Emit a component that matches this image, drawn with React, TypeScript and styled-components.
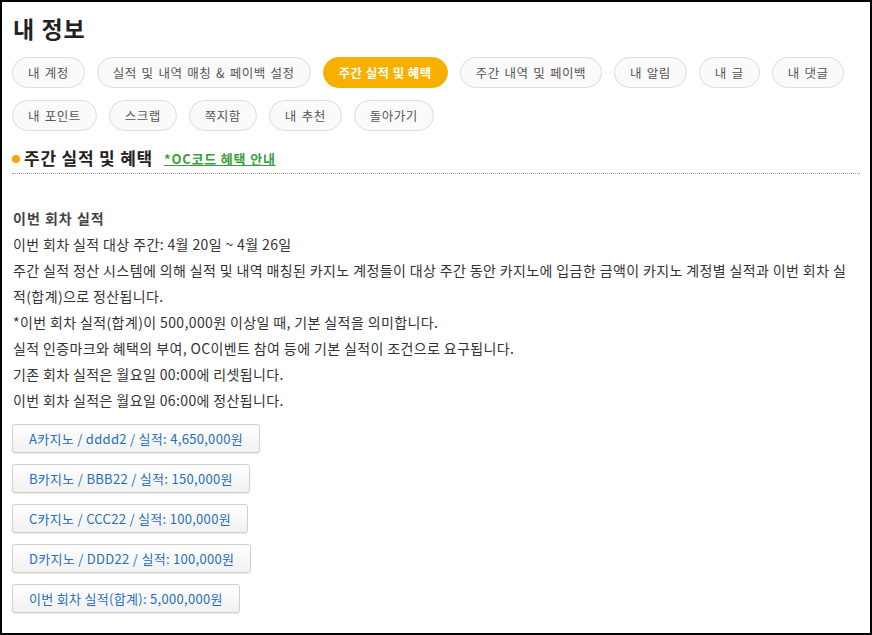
import React from "react";
import styled, { createGlobalStyle } from "styled-components";

const Global = createGlobalStyle`
  html, body { margin: 0; padding: 0; background: #fff; }
  body { font-family: "Noto Sans CJK KR", "Noto Sans", sans-serif; }
  * { box-sizing: border-box; }
`;

const Frame = styled.div`
  width: 872px;
  height: 635px;
  border: 2px solid #000;
  padding: 11px 10px 0 10px;
  overflow: hidden;
  color: #333;
`;

const Title = styled.h1`
  margin: 0;
  font-size: 23px;
  line-height: 31px;
  font-weight: 700;
  letter-spacing: 1px;
  color: #222;
  padding-left: 1px;
`;

const PillRow = styled.div`
  display: flex;
  flex-wrap: wrap;
  gap: 12px 12px;
  margin-top: 13px;
`;

const Pill = styled.button<{ $active?: boolean }>`
  height: 31px;
  padding: 0 15px;
  border-radius: 16px;
  border: 1px solid ${(p) => (p.$active ? "#f7b000" : "#dcdcdc")};
  background: ${(p) => (p.$active ? "#f7b000" : "#fafafa")};
  color: ${(p) => (p.$active ? "#fff" : "#555")};
  font-family: inherit;
  font-size: 12.5px;
  font-weight: ${(p) => (p.$active ? 700 : 400)};
  letter-spacing: ${(p) => (p.$active ? "0.4px" : "0.5px")};
  word-spacing: ${(p) => (p.$active ? "0" : "1.5px")};
  cursor: pointer;
`;

const SectionHead = styled.div`
  display: flex;
  align-items: center;
  margin-top: 15px;
  padding-bottom: 3px;
  border-bottom: 1px dotted #999;
`;

const Dot = styled.span`
  width: 8px;
  height: 8px;
  border-radius: 50%;
  background: #f7a800;
  margin-right: 4px;
  margin-top: 2px;
`;

const SectionTitle = styled.h2`
  margin: 0;
  font-size: 17px;
  line-height: 24px;
  font-weight: 700;
  letter-spacing: 0.8px;
  color: #222;
`;

const GuideLink = styled.a`
  margin-left: 11px;
  font-size: 13px;
  font-weight: 700;
  letter-spacing: 0.8px;
  color: #3d9e3d;
  text-decoration: underline;
  cursor: pointer;
`;

const Content = styled.div`
  margin-top: 31px;
  margin-right: 5px;
  padding-left: 1px;
  font-size: 14px;
  line-height: 26px;
  letter-spacing: 0.38px;
  word-break: break-all;
  color: #333;
`;

const SubTitle = styled.div`
  font-size: 14px;
  font-weight: 700;
  letter-spacing: 1px;
  color: #444;
`;

const Line = styled.div``;

const ResultList = styled.div`
  display: flex;
  flex-direction: column;
  align-items: flex-start;
  gap: 11px;
  margin-top: 11px;
  margin-left: -1px;
`;

const ResultButton = styled.button`
  height: 29px;
  padding: 0 16px;
  border: 1px solid #cfcfcf;
  border-radius: 3px;
  background: linear-gradient(#ffffff, #f1f1f1);
  box-shadow: 0 1px 1px rgba(0, 0, 0, 0.08);
  color: #1f6fbf;
  font-family: inherit;
  font-size: 13px;
  letter-spacing: 0.3px;
  cursor: pointer;
`;

const tabs = [
  "내 계정",
  "실적 및 내역 매칭 & 페이백 설정",
  "주간 실적 및 혜택",
  "주간 내역 및 페이백",
  "내 알림",
  "내 글",
  "내 댓글",
  "내 포인트",
  "스크랩",
  "쪽지함",
  "내 추천",
  "돌아가기",
];

const lines = [
  "이번 회차 실적 대상 주간: 4월 20일 ~ 4월 26일",
  "주간 실적 정산 시스템에 의해 실적 및 내역 매칭된 카지노 계정들이 대상 주간 동안 카지노에 입금한 금액이 카지노 계정별 실적과 이번 회차 실적(합계)으로 정산됩니다.",
  "*이번 회차 실적(합계)이 500,000원 이상일 때, 기본 실적을 의미합니다.",
  "실적 인증마크와 혜택의 부여, OC이벤트 참여 등에 기본 실적이 조건으로 요구됩니다.",
  "기존 회차 실적은 월요일 00:00에 리셋됩니다.",
  "이번 회차 실적은 월요일 06:00에 정산됩니다.",
];

const results = [
  "A카지노 / dddd2 / 실적: 4,650,000원",
  "B카지노 / BBB22 / 실적: 150,000원",
  "C카지노 / CCC22 / 실적: 100,000원",
  "D카지노 / DDD22 / 실적: 100,000원",
  "이번 회차 실적(합계): 5,000,000원",
];

export default function App() {
  return (
    <>
      <Global />
      <Frame>
        <Title>내 정보</Title>
        <PillRow>
          {tabs.map((t) => (
            <Pill key={t} $active={t === "주간 실적 및 혜택"}>
              {t}
            </Pill>
          ))}
        </PillRow>
        <SectionHead>
          <Dot />
          <SectionTitle>주간 실적 및 혜택</SectionTitle>
          <GuideLink>*OC코드 혜택 안내</GuideLink>
        </SectionHead>
        <Content>
          <SubTitle>이번 회차 실적</SubTitle>
          {lines.map((l) => (
            <Line key={l}>{l}</Line>
          ))}
          <ResultList>
            {results.map((r) => (
              <ResultButton key={r}>{r}</ResultButton>
            ))}
          </ResultList>
        </Content>
      </Frame>
    </>
  );
}
